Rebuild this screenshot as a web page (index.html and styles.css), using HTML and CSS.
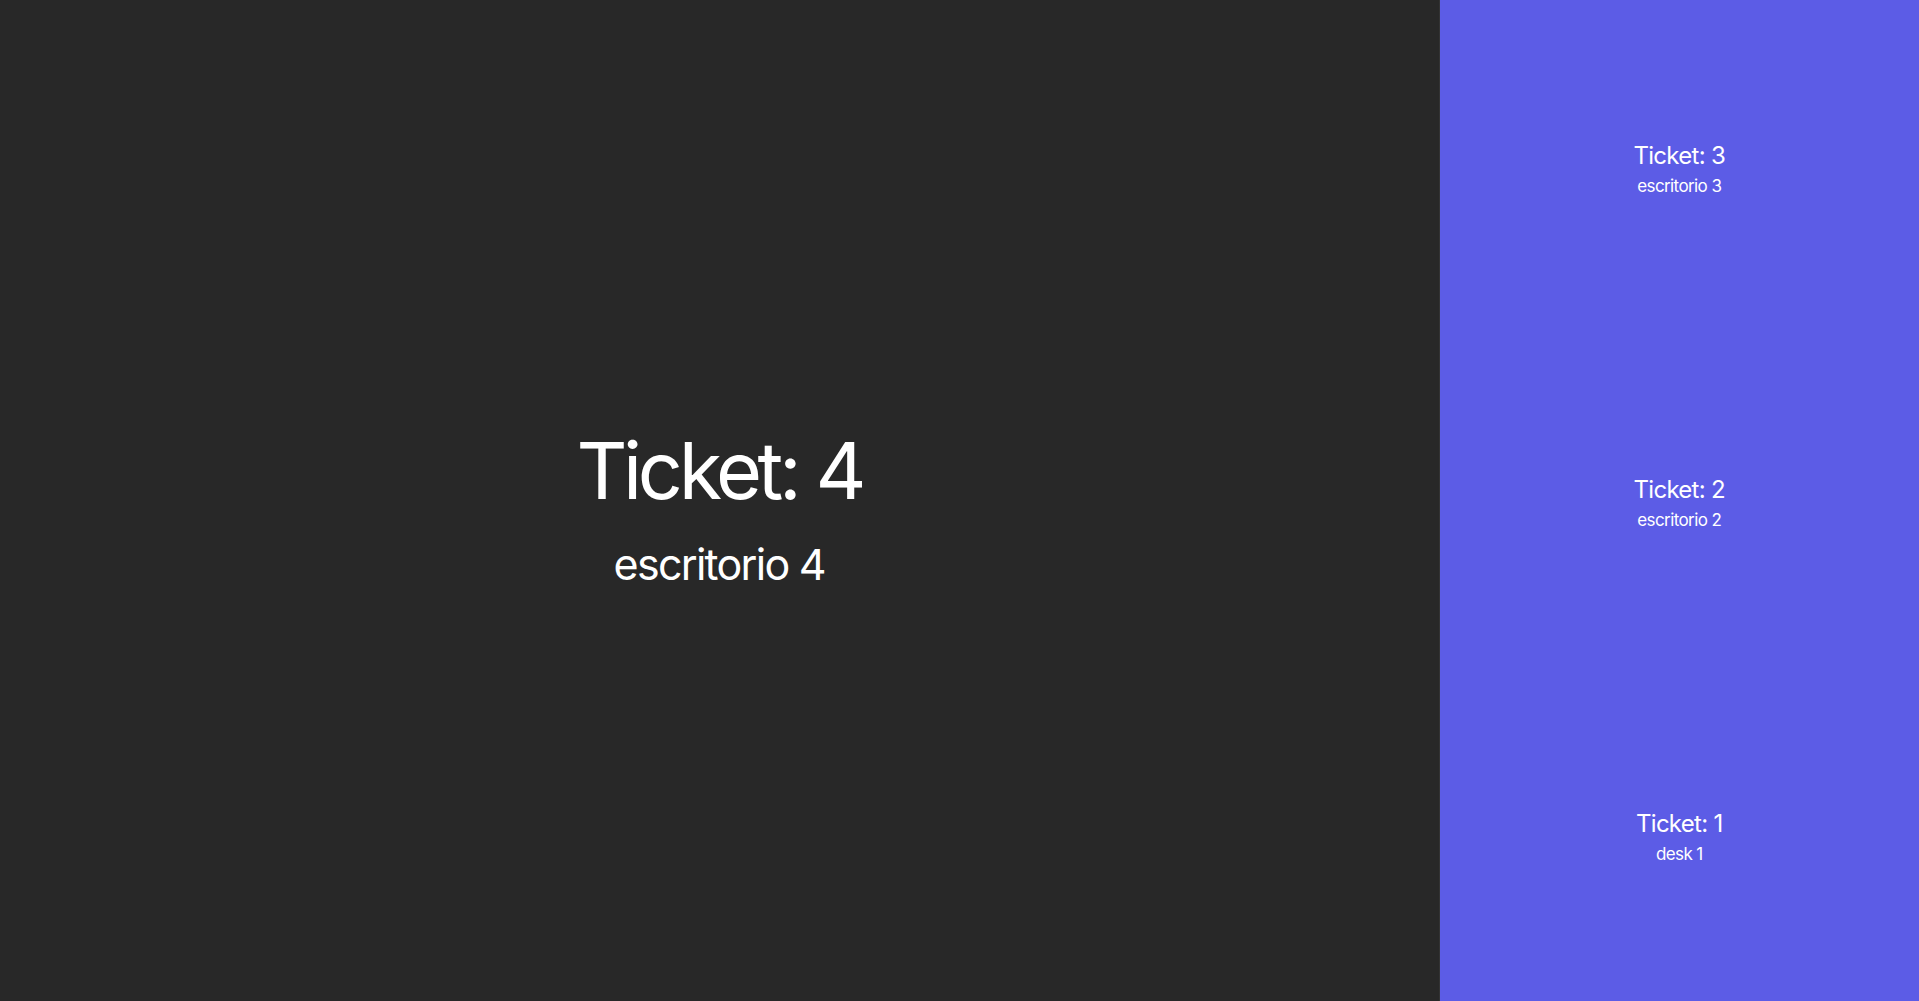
FILE: index.html
```html
<!DOCTYPE html>
<html lang="es">
<head>
<meta charset="utf-8">
<title>Tickets</title>
<link rel="stylesheet" href="styles.css">
</head>
<body>
<div class="screen">
  <main class="current">
    <div class="current-ticket">Ticket: 4</div>
    <div class="current-desk">escritorio 4</div>
  </main>
  <aside class="history">
    <div class="item">
      <div class="item-ticket">Ticket: 3</div>
      <div class="item-desk">escritorio 3</div>
    </div>
    <div class="item">
      <div class="item-ticket">Ticket: 2</div>
      <div class="item-desk">escritorio 2</div>
    </div>
    <div class="item">
      <div class="item-ticket">Ticket: 1</div>
      <div class="item-desk">desk 1</div>
    </div>
  </aside>
</div>
</body>
</html>
```
FILE: styles.css
```css
html, body {
  margin: 0;
  padding: 0;
  height: 100%;
}
body {
  font-family: Inter, "Noto Sans", sans-serif;
  color: #ffffff;
}
.screen {
  display: flex;
  height: 100vh;
}
.current {
  flex: 3;
  background: #282828;
  border-right: 1px solid #333333;
  display: flex;
  flex-direction: column;
  align-items: center;
  justify-content: center;
  padding-top: 12px;
}
.current-ticket {
  font-size: 79px;
  line-height: 1.2;
  letter-spacing: -0.055em;
}
.current-desk {
  font-size: 43px;
  line-height: 1.2;
  letter-spacing: -0.04em;
  margin-top: 21px;
}
.history {
  flex: 1;
  background: #5c5ce6;
  display: flex;
  flex-direction: column;
}
.item {
  flex: 1;
  display: flex;
  flex-direction: column;
  align-items: center;
  justify-content: center;
  padding-top: 5px;
}
.item-ticket {
  font-size: 24px;
  line-height: 1.25;
  letter-spacing: -0.03em;
}
.item-desk {
  font-size: 17px;
  line-height: 1.3;
  letter-spacing: -0.035em;
  margin-top: 4px;
}
```
